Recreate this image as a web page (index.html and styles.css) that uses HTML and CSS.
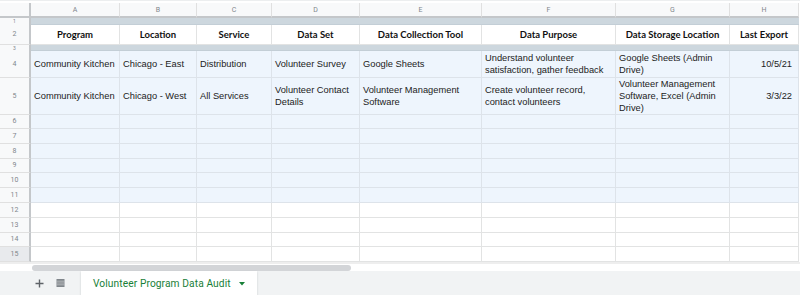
FILE: index.html
```html
<!DOCTYPE html>
<html>
<head>
<meta charset="utf-8">
<link rel="stylesheet" href="styles.css">
</head>
<body>
<div class="sheet">
  <div class="grid">
    <div class="corner"></div>
    <div class="ch">A</div><div class="ch">B</div><div class="ch">C</div><div class="ch">D</div><div class="ch">E</div><div class="ch">F</div><div class="ch">G</div><div class="ch">H</div>

    <div class="rh rh-band">1</div>
    <div class="band"></div>

    <div class="rh">2</div>
    <div class="c hd">Program</div><div class="c hd">Location</div><div class="c hd">Service</div><div class="c hd">Data Set</div><div class="c hd">Data Collection Tool</div><div class="c hd">Data Purpose</div><div class="c hd">Data Storage Location</div><div class="c hd">Last Export</div>

    <div class="rh rh-band">3</div>
    <div class="band"></div>

    <div class="rh">4</div>
    <div class="c t">Community Kitchen</div><div class="c t">Chicago - East</div><div class="c t">Distribution</div><div class="c t">Volunteer Survey</div><div class="c t">Google Sheets</div><div class="c t">Understand volunteer satisfaction, gather feedback</div><div class="c t">Google Sheets (Admin Drive)</div><div class="c t num">10/5/21</div>

    <div class="rh">5</div>
    <div class="c t">Community Kitchen</div><div class="c t">Chicago - West</div><div class="c t">All Services</div><div class="c t">Volunteer Contact Details</div><div class="c t">Volunteer Management Software</div><div class="c t">Create volunteer record, contact volunteers</div><div class="c t">Volunteer Management Software, Excel (Admin Drive)</div><div class="c t num">3/3/22</div>

    <div class="rh">6</div>
    <div class="c t"></div><div class="c t"></div><div class="c t"></div><div class="c t"></div><div class="c t"></div><div class="c t"></div><div class="c t"></div><div class="c t"></div>
    <div class="rh">7</div>
    <div class="c t"></div><div class="c t"></div><div class="c t"></div><div class="c t"></div><div class="c t"></div><div class="c t"></div><div class="c t"></div><div class="c t"></div>
    <div class="rh">8</div>
    <div class="c t"></div><div class="c t"></div><div class="c t"></div><div class="c t"></div><div class="c t"></div><div class="c t"></div><div class="c t"></div><div class="c t"></div>
    <div class="rh">9</div>
    <div class="c t"></div><div class="c t"></div><div class="c t"></div><div class="c t"></div><div class="c t"></div><div class="c t"></div><div class="c t"></div><div class="c t"></div>
    <div class="rh">10</div>
    <div class="c t"></div><div class="c t"></div><div class="c t"></div><div class="c t"></div><div class="c t"></div><div class="c t"></div><div class="c t"></div><div class="c t"></div>
    <div class="rh">11</div>
    <div class="c t"></div><div class="c t"></div><div class="c t"></div><div class="c t"></div><div class="c t"></div><div class="c t"></div><div class="c t"></div><div class="c t"></div>

    <div class="rh">12</div>
    <div class="c"></div><div class="c"></div><div class="c"></div><div class="c"></div><div class="c"></div><div class="c"></div><div class="c"></div><div class="c"></div>
    <div class="rh">13</div>
    <div class="c"></div><div class="c"></div><div class="c"></div><div class="c"></div><div class="c"></div><div class="c"></div><div class="c"></div><div class="c"></div>
    <div class="rh">14</div>
    <div class="c"></div><div class="c"></div><div class="c"></div><div class="c"></div><div class="c"></div><div class="c"></div><div class="c"></div><div class="c"></div>
    <div class="rh rh-last">15</div>
    <div class="c"></div><div class="c"></div><div class="c"></div><div class="c"></div><div class="c"></div><div class="c"></div><div class="c"></div><div class="c"></div>
  </div>

  <div class="hscroll"><div class="thumb"></div></div>

  <div class="tabbar">
    <svg class="ico ico-add" width="9" height="9" viewBox="0 0 9 9"><path d="M4.5 0.5v8M0.5 4.5h8" stroke="#5f6368" stroke-width="1.4" fill="none"/></svg>
    <svg class="ico ico-list" width="9" height="8" viewBox="0 0 9 8"><rect x="0.5" y="0" width="8" height="8" fill="#80868b"/><path d="M0.5 2.2h8M0.5 4h8M0.5 5.8h8" stroke="#c8cacd" stroke-width="0.7"/></svg>
    <div class="tab">
      <span class="tab-name">Volunteer Program Data Audit</span>
      <svg class="caret" width="6" height="4" viewBox="0 0 6 4"><path d="M0 0h6L3 3.5z" fill="#188038"/></svg>
    </div>
  </div>
</div>
</body>
</html>
```

FILE: styles.css
```css
* { box-sizing: border-box; }
html, body { margin: 0; padding: 0; }
body {
  width: 800px;
  height: 295px;
  overflow: hidden;
  background: #ffffff;
  font-family: "Liberation Sans", Arial, sans-serif;
}
.sheet {
  padding-top: 2px;
  border-top: 1px solid #eceeef;
}
.grid {
  display: grid;
  grid-template-columns: 31px 89px 77px 75px 88px 122px 134px 114px 69px;
  grid-template-rows: 15px 7px 20px 6px 27px 37px 14px 15px 15px 14px 15px 15px 15px 15px 14px 15px;
}
.corner {
  background: #f8f9fa;
  border-right: 2px solid #c4c7ca;
  border-bottom: 2px solid #c4c7ca;
}
.ch {
  background: #f8f9fa;
  border-right: 1px solid #e0e0e0;
  border-bottom: 2px solid #c4c7ca;
  color: #80868b;
  font-family: Roboto, "Liberation Sans", sans-serif;
  font-size: 7px;
  display: flex;
  align-items: center;
  justify-content: center;
}
.rh {
  background: #f8f9fa;
  border-right: 2px solid #c4c7ca;
  border-bottom: 1px solid #e0e0e0;
  color: #80868b;
  font-family: Roboto, "Liberation Sans", sans-serif;
  font-size: 7px;
  display: flex;
  align-items: center;
  justify-content: center;
  overflow: hidden;
  line-height: 7px;
}
.rh-band {
  font-size: 5px;
  line-height: 5px;
  border-bottom: none;
}
.rh-last { background: #e8eaed; }
.band {
  grid-column: 2 / -1;
  background: #cdd7de;
  border-bottom: 1px solid #c3ced6;
}
.c {
  border-right: 1px solid #e2e3e3;
  border-bottom: 1px solid #e2e3e3;
  background: #ffffff;
  color: #222222;
  font-size: 9.3px;
  line-height: 12px;
  padding: 0 3px;
  display: flex;
  align-items: center;
  overflow: hidden;
}
.c.t {
  background: #eef5fd;
  border-right-color: #dde3ea;
  border-bottom-color: #dde3ea;
}
.c.hd {
  font-family: Lato, "Open Sans", sans-serif;
  font-weight: 700;
  font-size: 9.5px;
  color: #111111;
  justify-content: center;
  text-align: center;
  border-bottom: 1px solid #e2e3e3;
}
.c.num { justify-content: flex-end; padding-right: 6px; }
.hscroll {
  height: 9px;
  border-top: 2px solid #eeeeee;
  padding-top: 1px;
}
.thumb {
  margin-left: 32px;
  width: 319px;
  height: 6px;
  border-radius: 3px;
  background: #d3d5d8;
}
.tabbar {
  height: 24px;
  background: #f1f3f4;
  display: flex;
  align-items: stretch;
}
.ico { align-self: center; }
.ico-add { margin-left: 35px; }
.ico-list { margin-left: 12px; }
.tab {
  margin-left: 16px;
  width: 176px;
  background: #ffffff;
  display: flex;
  align-items: center;
  padding-left: 12px;
  box-shadow: 0 1px 2px rgba(60,64,67,0.2);
}
.tab-name {
  color: #188038;
  font-family: Roboto, "Liberation Sans", sans-serif;
  font-size: 10.2px;
  letter-spacing: 0.1px;
}
.caret { margin-left: 8px; margin-top: 1px; }
```
